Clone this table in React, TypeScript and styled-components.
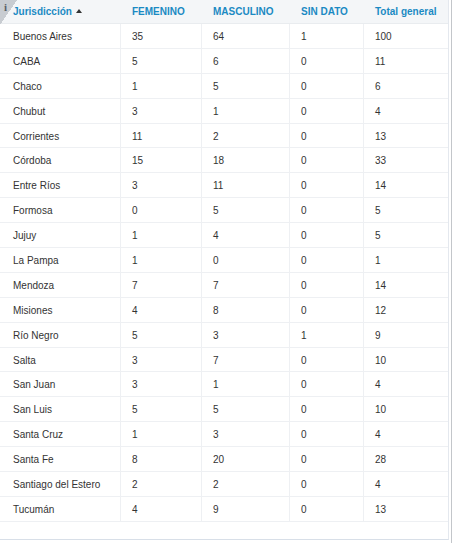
import React, { FC } from 'react';
import styled, { createGlobalStyle } from 'styled-components';

interface RowData {
  name: string;
  fem: number;
  masc: number;
  sinDato: number;
  total: number;
}

const rows: RowData[] = [
  { name: 'Buenos Aires', fem: 35, masc: 64, sinDato: 1, total: 100 },
  { name: 'CABA', fem: 5, masc: 6, sinDato: 0, total: 11 },
  { name: 'Chaco', fem: 1, masc: 5, sinDato: 0, total: 6 },
  { name: 'Chubut', fem: 3, masc: 1, sinDato: 0, total: 4 },
  { name: 'Corrientes', fem: 11, masc: 2, sinDato: 0, total: 13 },
  { name: 'Córdoba', fem: 15, masc: 18, sinDato: 0, total: 33 },
  { name: 'Entre Ríos', fem: 3, masc: 11, sinDato: 0, total: 14 },
  { name: 'Formosa', fem: 0, masc: 5, sinDato: 0, total: 5 },
  { name: 'Jujuy', fem: 1, masc: 4, sinDato: 0, total: 5 },
  { name: 'La Pampa', fem: 1, masc: 0, sinDato: 0, total: 1 },
  { name: 'Mendoza', fem: 7, masc: 7, sinDato: 0, total: 14 },
  { name: 'Misiones', fem: 4, masc: 8, sinDato: 0, total: 12 },
  { name: 'Río Negro', fem: 5, masc: 3, sinDato: 1, total: 9 },
  { name: 'Salta', fem: 3, masc: 7, sinDato: 0, total: 10 },
  { name: 'San Juan', fem: 3, masc: 1, sinDato: 0, total: 4 },
  { name: 'San Luis', fem: 5, masc: 5, sinDato: 0, total: 10 },
  { name: 'Santa Cruz', fem: 1, masc: 3, sinDato: 0, total: 4 },
  { name: 'Santa Fe', fem: 8, masc: 20, sinDato: 0, total: 28 },
  { name: 'Santiago del Estero', fem: 2, masc: 2, sinDato: 0, total: 4 },
  { name: 'Tucumán', fem: 4, masc: 9, sinDato: 0, total: 13 },
];

const GlobalStyle = createGlobalStyle`
  html, body {
    margin: 0;
    padding: 0;
    background: #fff;
  }

  body {
    font-family: "Liberation Sans", Arial, sans-serif;
  }
`;

const Page = styled.div`
  width: 452px;
  height: 543px;
  box-sizing: border-box;
  border-right: 1px solid #c3c6ca;
  padding-right: 1px;
`;

const Frame = styled.div`
  position: relative;
  width: 449px;
  height: 540px;
  box-sizing: border-box;
  border-right: 1px solid #e4e8ee;
  border-bottom: 1px solid #d8dfe8;
  background: #fff;
`;

const Grid = styled.div`
  display: grid;
  grid-template-columns: 121px 81px 88px 74px 84px;
`;

const HeaderRow = styled(Grid)`
  height: 24px;
  box-sizing: border-box;
  background: #f4f6f8;
  border-bottom: 1px solid #e9ecef;
`;

const BodyRow = styled(Grid)`
  height: 24.9px;
  box-sizing: border-box;
  border-bottom: 1px solid #eef0f3;
`;

const HeadCell = styled.div<{ $first?: boolean }>`
  display: flex;
  align-items: center;
  gap: 4px;
  padding-left: ${(p) => (p.$first ? '13px' : '11px')};
  font-size: 10px;
  font-weight: bold;
  color: #1b8ac3;
  white-space: nowrap;
`;

const Cell = styled.div<{ $first?: boolean; $last?: boolean }>`
  display: flex;
  align-items: center;
  box-sizing: border-box;
  padding-top: 1px;
  padding-left: ${(p) => (p.$first ? '13px' : '11px')};
  border-right: ${(p) => (p.$last ? 'none' : '1px solid #eef0f3')};
  font-size: 10px;
  color: #333;
  white-space: nowrap;
`;

const SortArrow = styled.span`
  width: 0;
  height: 0;
  border-left: 3.5px solid transparent;
  border-right: 3.5px solid transparent;
  border-bottom: 4px solid #333;
  margin-top: -1px;
`;

const Corner = styled.div`
  position: absolute;
  left: 0;
  top: 0;
  width: 17px;
  height: 25px;
  background: linear-gradient(to bottom right, #c8ccd1 50%, transparent 50%);
`;

const InfoGlyph = styled.span`
  position: absolute;
  left: 4px;
  top: 1px;
  font-family: "Liberation Serif", "Times New Roman", serif;
  font-size: 11px;
  font-weight: bold;
  color: #5a5f66;
`;

const App: FC = () => (
  <>
    <GlobalStyle />
    <Page>
      <Frame>
        <HeaderRow>
          <HeadCell $first>
            Jurisdicción
            <SortArrow />
          </HeadCell>
          <HeadCell>FEMENINO</HeadCell>
          <HeadCell>MASCULINO</HeadCell>
          <HeadCell>SIN DATO</HeadCell>
          <HeadCell>Total general</HeadCell>
        </HeaderRow>
        {rows.map((r) => (
          <BodyRow key={r.name}>
            <Cell $first>{r.name}</Cell>
            <Cell>{r.fem}</Cell>
            <Cell>{r.masc}</Cell>
            <Cell>{r.sinDato}</Cell>
            <Cell $last>{r.total}</Cell>
          </BodyRow>
        ))}
        <Corner />
        <InfoGlyph>i</InfoGlyph>
      </Frame>
    </Page>
  </>
);

export default App;
